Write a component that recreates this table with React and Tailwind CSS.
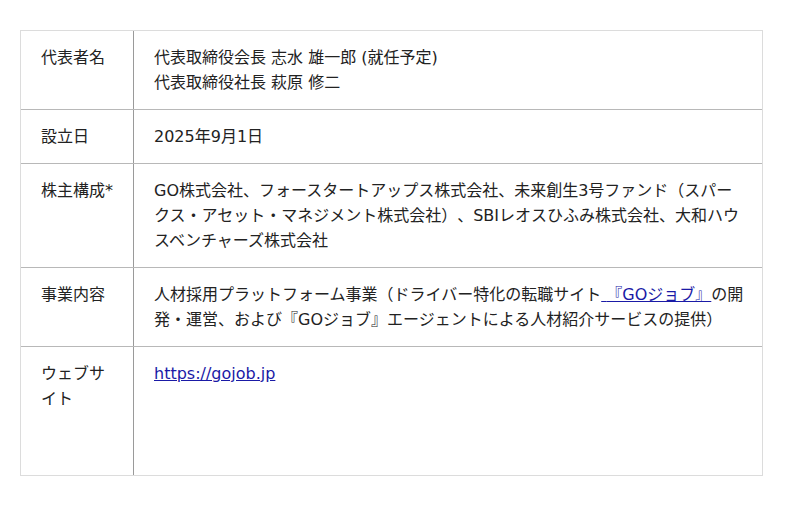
export default function App() {
  const rows = [
    {
      label: "代表者名",
      value: (
        <>
          代表取締役会長 志水 雄一郎 (就任予定)
          <br />
          代表取締役社長 萩原 修二
        </>
      ),
    },
    { label: "設立日", value: "2025年9月1日" },
    {
      label: "株主構成*",
      value:
        "GO株式会社、フォースタートアップス株式会社、未来創生3号ファンド（スパークス・アセット・マネジメント株式会社）、SBIレオスひふみ株式会社、大和ハウスベンチャーズ株式会社",
    },
    {
      label: "事業内容",
      value: (
        <>
          人材採用プラットフォーム事業（ドライバー特化の転職サイト
          <a href="#" className="text-[#1a1aa6] underline">
            {" "}『GOジョブ』
          </a>
          の開発・運営、および『GOジョブ』エージェントによる人材紹介サービスの提供）
        </>
      ),
    },
    {
      label: "ウェブサイト",
      value: (
        <a href="#" className="text-[#1a1aa6] underline">
          https://gojob.jp
        </a>
      ),
      tall: true,
    },
  ];
  return (
    <div
      className="min-h-[506px] bg-white pt-[30px] pl-[20px] text-[16px] leading-[25px] text-[#222] [text-spacing-trim:space-all]"
      style={{ fontFamily: '"DejaVu Sans", "Noto Sans CJK JP", sans-serif' }}
    >
      <div className="w-[743px] border border-[#dcdcdc]">
        {rows.map((r, i) => (
          <div
            key={i}
            className={
              "flex " +
              (i < rows.length - 1 ? "border-b border-[#b8b8b8] " : "") +
              (r.tall ? "h-[128px]" : "")
            }
          >
            <div className="w-[113px] shrink-0 border-r border-[#9a9a9a] px-[20px] py-[14px]">
              {r.label}
            </div>
            <div className="flex-1 pl-[20px] pr-[16px] py-[14px]">{r.value}</div>
          </div>
        ))}
      </div>
    </div>
  );
}
